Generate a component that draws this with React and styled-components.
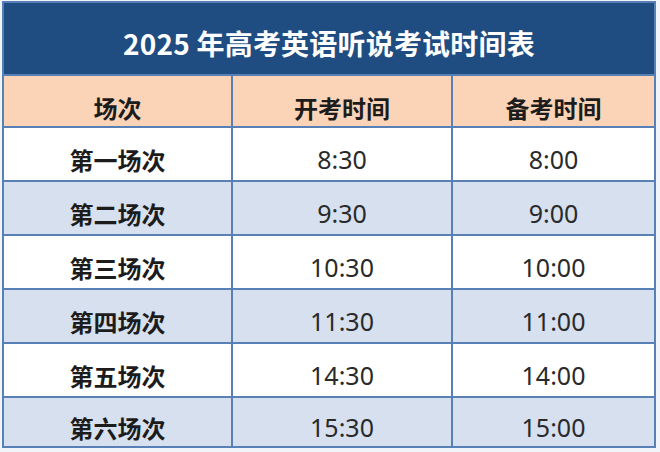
import React from "react";
import styled, { createGlobalStyle } from "styled-components";

const Global = createGlobalStyle`
  html, body {
    margin: 0;
    padding: 0;
    background: #f1f4f9;
  }
  body {
    width: 660px;
    height: 452px;
    overflow: hidden;
  }
`;

const Table = styled.div`
  margin: 1px 0 0 2px;
  width: 654px;
  box-sizing: border-box;
  display: grid;
  grid-template-columns: 227px 218px 201px;
  grid-template-rows: 71px 50px 52px 52px 52px 52px 52px 48px;
  gap: 2px;
  padding: 2px;
  background: #587fb6;
`;

const Title = styled.div`
  grid-column: 1 / -1;
  background: #1f4d81;
  color: #ffffff;
  font-family: "Noto Sans CJK SC", "Noto Sans", sans-serif;
  font-weight: 700;
  font-size: 28px;
  line-height: 1;
  display: flex;
  align-items: center;
  justify-content: center;
  padding-top: 9px;
  box-sizing: border-box;
  letter-spacing: 0.2px;
`;

const Cell = styled.div`
  background: ${(p) => p.$bg};
  color: #1f1f1f;
  font-family: ${(p) =>
    p.$num
      ? `"Noto Sans", "Noto Sans CJK SC", sans-serif`
      : `"Noto Sans CJK SC", "Noto Sans", sans-serif`};
  font-weight: ${(p) => (p.$num ? 400 : 700)};
  font-size: ${(p) => (p.$num ? "25px" : "24px")};
  color: ${(p) => (p.$num ? "#2a2a2a" : "#1c1c1c")};
  line-height: 1;
  display: flex;
  align-items: center;
  justify-content: center;
  padding-top: ${(p) => (p.$head ? "13px" : "11px")};
  box-sizing: border-box;
`;

const HEAD_BG = "#fbd3b6";
const rows = [
  ["第一场次", "8:30", "8:00"],
  ["第二场次", "9:30", "9:00"],
  ["第三场次", "10:30", "10:00"],
  ["第四场次", "11:30", "11:00"],
  ["第五场次", "14:30", "14:00"],
  ["第六场次", "15:30", "15:00"],
];

export default function App() {
  return (
    <>
      <Global />
      <Table>
        <Title>2025 年高考英语听说考试时间表</Title>
        <Cell $bg={HEAD_BG} $head>场次</Cell>
        <Cell $bg={HEAD_BG} $head>开考时间</Cell>
        <Cell $bg={HEAD_BG} $head>备考时间</Cell>
        {rows.map((r, i) => {
          const bg = i % 2 === 0 ? "#ffffff" : "#d6e0ef";
          return (
            <React.Fragment key={r[0]}>
              <Cell $bg={bg}>{r[0]}</Cell>
              <Cell $bg={bg} $num>{r[1]}</Cell>
              <Cell $bg={bg} $num>{r[2]}</Cell>
            </React.Fragment>
          );
        })}
      </Table>
    </>
  );
}
